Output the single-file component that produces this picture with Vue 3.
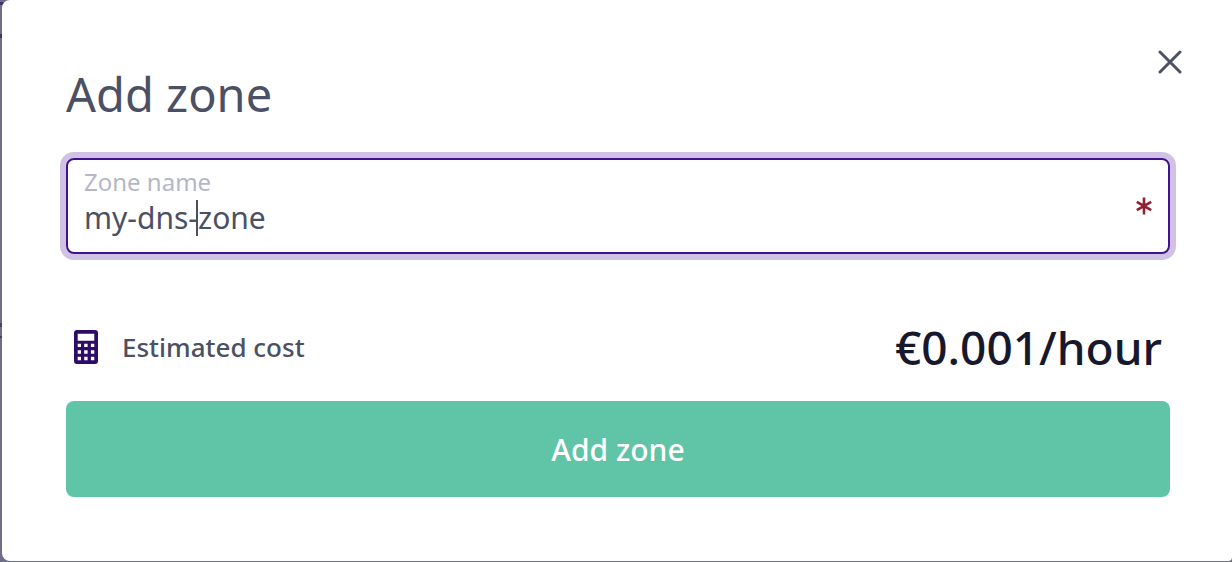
<script setup>
import { ref, computed } from 'vue'

const zone = ref('my-dns-zone')
const caretAt = ref(7)
const beforeCaret = computed(() => zone.value.slice(0, caretAt.value))

function trackCaret(event) {
  caretAt.value = event.target.selectionStart
}
</script>

<template>
  <div class="backdrop">
    <section class="modal" role="dialog" aria-labelledby="dialog-title">
      <header class="head">
        <h1 id="dialog-title">Add zone</h1>
        <button class="close" type="button" aria-label="Close">
          <svg viewBox="0 0 24 24" width="24" height="24" aria-hidden="true">
            <path d="M2 2 22 22M22 2 2 22" fill="none" stroke="currentColor" stroke-width="3" stroke-linecap="round" />
          </svg>
        </button>
      </header>

      <form @submit.prevent>
        <div class="field">
          <div class="entry">
            <label for="zone-name">Zone name</label>
            <div class="line">
              <input id="zone-name" v-model="zone" type="text" required autocomplete="off" spellcheck="false" @select="trackCaret" @keyup="trackCaret" @click="trackCaret" />
              <span class="caret" aria-hidden="true">{{ beforeCaret }}</span>
            </div>
          </div>
          <svg class="required" viewBox="0 0 16 18" width="16" height="18" aria-hidden="true">
            <path d="M8 0.5V17.5M0.8 4.8 15.2 13.2M15.2 4.8 0.8 13.2" fill="none" stroke="currentColor" stroke-width="2.6" />
          </svg>
        </div>

        <div class="cost">
          <svg viewBox="0 0 24 34" width="24" height="34" aria-hidden="true">
            <path
              fill="currentColor"
              fill-rule="evenodd"
              d="M3 0H21Q24 0 24 3V31Q24 34 21 34H3Q0 34 0 31V3Q0 0 3 0ZM3.7 3.7V10.7H20.3V3.7ZM3.7 13.7V17H7V13.7ZM10.2 13.7V17H13.6V13.7ZM16.9 13.7V17H20.3V13.7ZM3.7 20.2V23.7H7V20.2ZM10.2 20.2V23.7H13.6V20.2ZM16.9 20.2V23.7H20.3V20.2ZM3.7 26.8V30.2H7V26.8ZM10.2 26.8V30.2H13.6V26.8ZM16.9 26.8V30.2H20.3V26.8Z"
            />
          </svg>
          <span class="cost-label">Estimated cost</span>
          <strong class="price">€0.001/hour</strong>
        </div>

        <button class="submit" type="submit">Add zone</button>
      </form>
    </section>
  </div>
</template>

<style>
body {
  margin: 0;
}
</style>

<style scoped>
* {
  box-sizing: border-box;
}
.backdrop {
  min-height: 100vh;
  padding: 0 0 1px 2px;
  background:
    linear-gradient(#3f3273, #3f3273) 0 2px / 100% 3px no-repeat,
    linear-gradient(#3f3273, #3f3273) 0 34px / 100% 4px no-repeat,
    linear-gradient(#454166, #454166) 0 323px / 100% 4px no-repeat,
    linear-gradient(#454166, #454166) 0 336px / 100% 2px no-repeat,
    #6e6f82;
  font-family: "Noto Sans", "Open Sans", sans-serif;
  color: #4b5064;
}
.modal {
  padding: 48px 62px 64px 64px;
  background: #fff;
  border-radius: 8px 0 4px 8px;
}
.head {
  display: flex;
  justify-content: space-between;
  align-items: flex-start;
  height: 110px;
}
h1 {
  margin: 16px 0 0;
  font-size: 47px;
  line-height: 60px;
  font-weight: 400;
}
.close {
  display: flex;
  padding: 2px;
  margin-right: -14px;
  border: 0;
  background: none;
  color: inherit;
}
.field {
  display: flex;
  align-items: center;
  height: 96px;
  padding: 0 16px;
  border: 2px solid #43118d;
  border-radius: 8px;
  box-shadow: 0 0 0 6px #d0c2e4;
}
.entry {
  flex: 1;
  padding-bottom: 8px;
}
label {
  display: block;
  font-size: 24px;
  line-height: 32px;
  color: #b5b7c8;
}
.line {
  position: relative;
  height: 40px;
}
input {
  display: block;
  width: 100%;
  height: 40px;
  padding: 0;
  border: 0;
  outline: 0;
  background: none;
  font: inherit;
  font-size: 30px;
  line-height: 40px;
  color: inherit;
}
.caret {
  position: absolute;
  top: 2px;
  left: 0;
  height: 36px;
  box-shadow: inset -2px 0 #4b5064;
  font-size: 30px;
  line-height: 36px;
  white-space: pre;
  color: transparent;
  pointer-events: none;
}
.required {
  color: #92202f;
}
.cost {
  display: flex;
  align-items: center;
  margin-top: 62px;
  height: 62px;
  padding: 0 8px;
  color: #2e0b66;
}
.cost-label {
  margin-left: 24px;
  font-size: 26px;
  line-height: 36px;
  font-weight: 500;
  color: #4b5064;
}
.price {
  margin-left: auto;
  font-size: 46px;
  line-height: 60px;
  font-weight: 500;
  color: #17182d;
}
.submit {
  display: block;
  width: 100%;
  height: 96px;
  margin-top: 23px;
  border: 0;
  border-radius: 8px;
  background: #60c4a6;
  font: inherit;
  font-size: 30px;
  font-weight: 500;
  color: #fff;
}
</style>
